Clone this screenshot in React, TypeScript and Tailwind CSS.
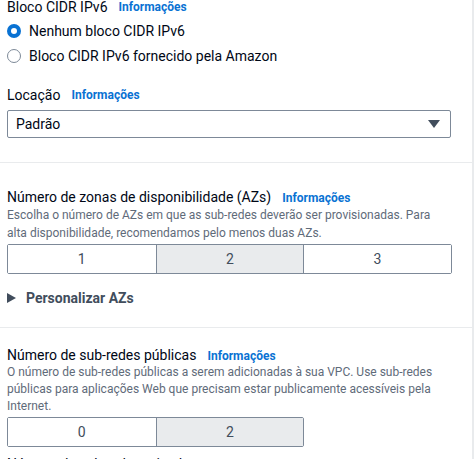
import React from "react";

const font = { fontFamily: "Roboto, 'Liberation Sans', sans-serif" };

function Info() {
  return <span className="ml-[11px] text-[12px] font-bold text-[#0972d3]">Informações</span>;
}

function Radio({ checked, label }: { checked?: boolean; label: string }) {
  return (
    <div className="flex h-[24px] items-center gap-[8px]">
      {checked ? (
        <span className="flex h-[14px] w-[14px] items-center justify-center rounded-full bg-[#0972d3]">
          <span className="h-[6px] w-[6px] rounded-full bg-white" />
        </span>
      ) : (
        <span className="h-[14px] w-[14px] rounded-full border-[1.5px] border-[#7d8998] bg-white" />
      )}
      <span className="text-[14px] text-[#000716]">{label}</span>
    </div>
  );
}

function Segmented({ items, selected }: { items: string[]; selected: number }) {
  return (
    <div className="flex h-[30px] w-fit rounded-[2px] border border-[#7d8998]">
      {items.map((it, i) => (
        <div
          key={it}
          className={
            "flex w-[147.6px] items-center justify-center text-[14px] text-[#414d5c] " +
            (i > 0 ? "border-l border-[#7d8998] " : "") +
            (i === selected ? "bg-[#e9ebed]" : "bg-white")
          }
        >
          {it}
        </div>
      ))}
    </div>
  );
}

export default function App() {
  return (
    <div className="h-[459px] w-[475px] overflow-hidden bg-white" style={font}>
      <div className="w-[474px] border-r-2 border-[#e9ebed]">
        <div className="px-[7px] pb-[24px] mt-[-2px]">
          <div className="flex h-[18px] items-center text-[14px] text-[#000716]">
            Bloco CIDR IPv6
            <Info />
          </div>
          <div className="mt-[3px]">
            <Radio checked label="Nenhum bloco CIDR IPv6" />
            <div className="mt-[1px]">
              <Radio label="Bloco CIDR IPv6 fornecido pela Amazon" />
            </div>
          </div>
          <div className="mt-[18px] flex h-[18px] items-center text-[14px] text-[#000716]">
            Locação
            <Info />
          </div>
          <div className="mt-[6px] flex h-[28px] w-[444px] items-center justify-between rounded-[2px] border border-[#7d8998] pl-[8px] pr-[10px] text-[14px] text-[#000716]">
            <span>Padrão</span>
            <svg width="12" height="10" viewBox="0 0 12 10">
              <path d="M0 1 H12 L6 9 Z" fill="#414d5c" />
            </svg>
          </div>
        </div>
        <div className="border-t border-[#e9ebed]" />
        <div className="px-[7px] pt-[26px] pb-[20px]">
          <div className="flex h-[17px] items-center text-[14px] text-[#000716]">
            Número de zonas de disponibilidade (AZs)
            <Info />
          </div>
          <div className="w-[440px] text-[12px] leading-[18px] text-[#5f6b7a]">
            Escolha o número de AZs em que as sub-redes deverão ser provisionadas. Para alta disponibilidade, recomendamos pelo menos duas AZs.
          </div>
          <div className="mt-[2px]">
            <Segmented items={["1", "2", "3"]} selected={1} />
          </div>
          <div className="mt-[15px] flex h-[18px] items-center gap-[10px] text-[14px] font-bold text-[#414d5c]">
            <svg width="9" height="10" viewBox="0 0 9 10">
              <path d="M0 0 L9 5 L0 10 Z" fill="#414d5c" />
            </svg>
            Personalizar AZs
          </div>
        </div>
        <div className="border-t border-[#e9ebed]" />
        <div className="px-[7px] pt-[19px]">
          <div className="flex h-[17px] items-center text-[14px] text-[#000716]">
            Número de sub-redes públicas
            <Info />
          </div>
          <div className="w-[450px] text-[12px] leading-[17px] text-[#5f6b7a]">
            O número de sub-redes públicas a serem adicionadas à sua VPC. Use sub-redes públicas para aplicações Web que precisam estar publicamente acessíveis pela Internet.
          </div>
          <div className="mt-[2px]">
            <Segmented items={["0", "2"]} selected={1} />
          </div>
          <div className="mt-[9px] flex h-[17px] items-center text-[14px] text-[#000716]">
            Número de sub-redes privadas
            <Info />
          </div>
        </div>
      </div>
    </div>
  );
}
